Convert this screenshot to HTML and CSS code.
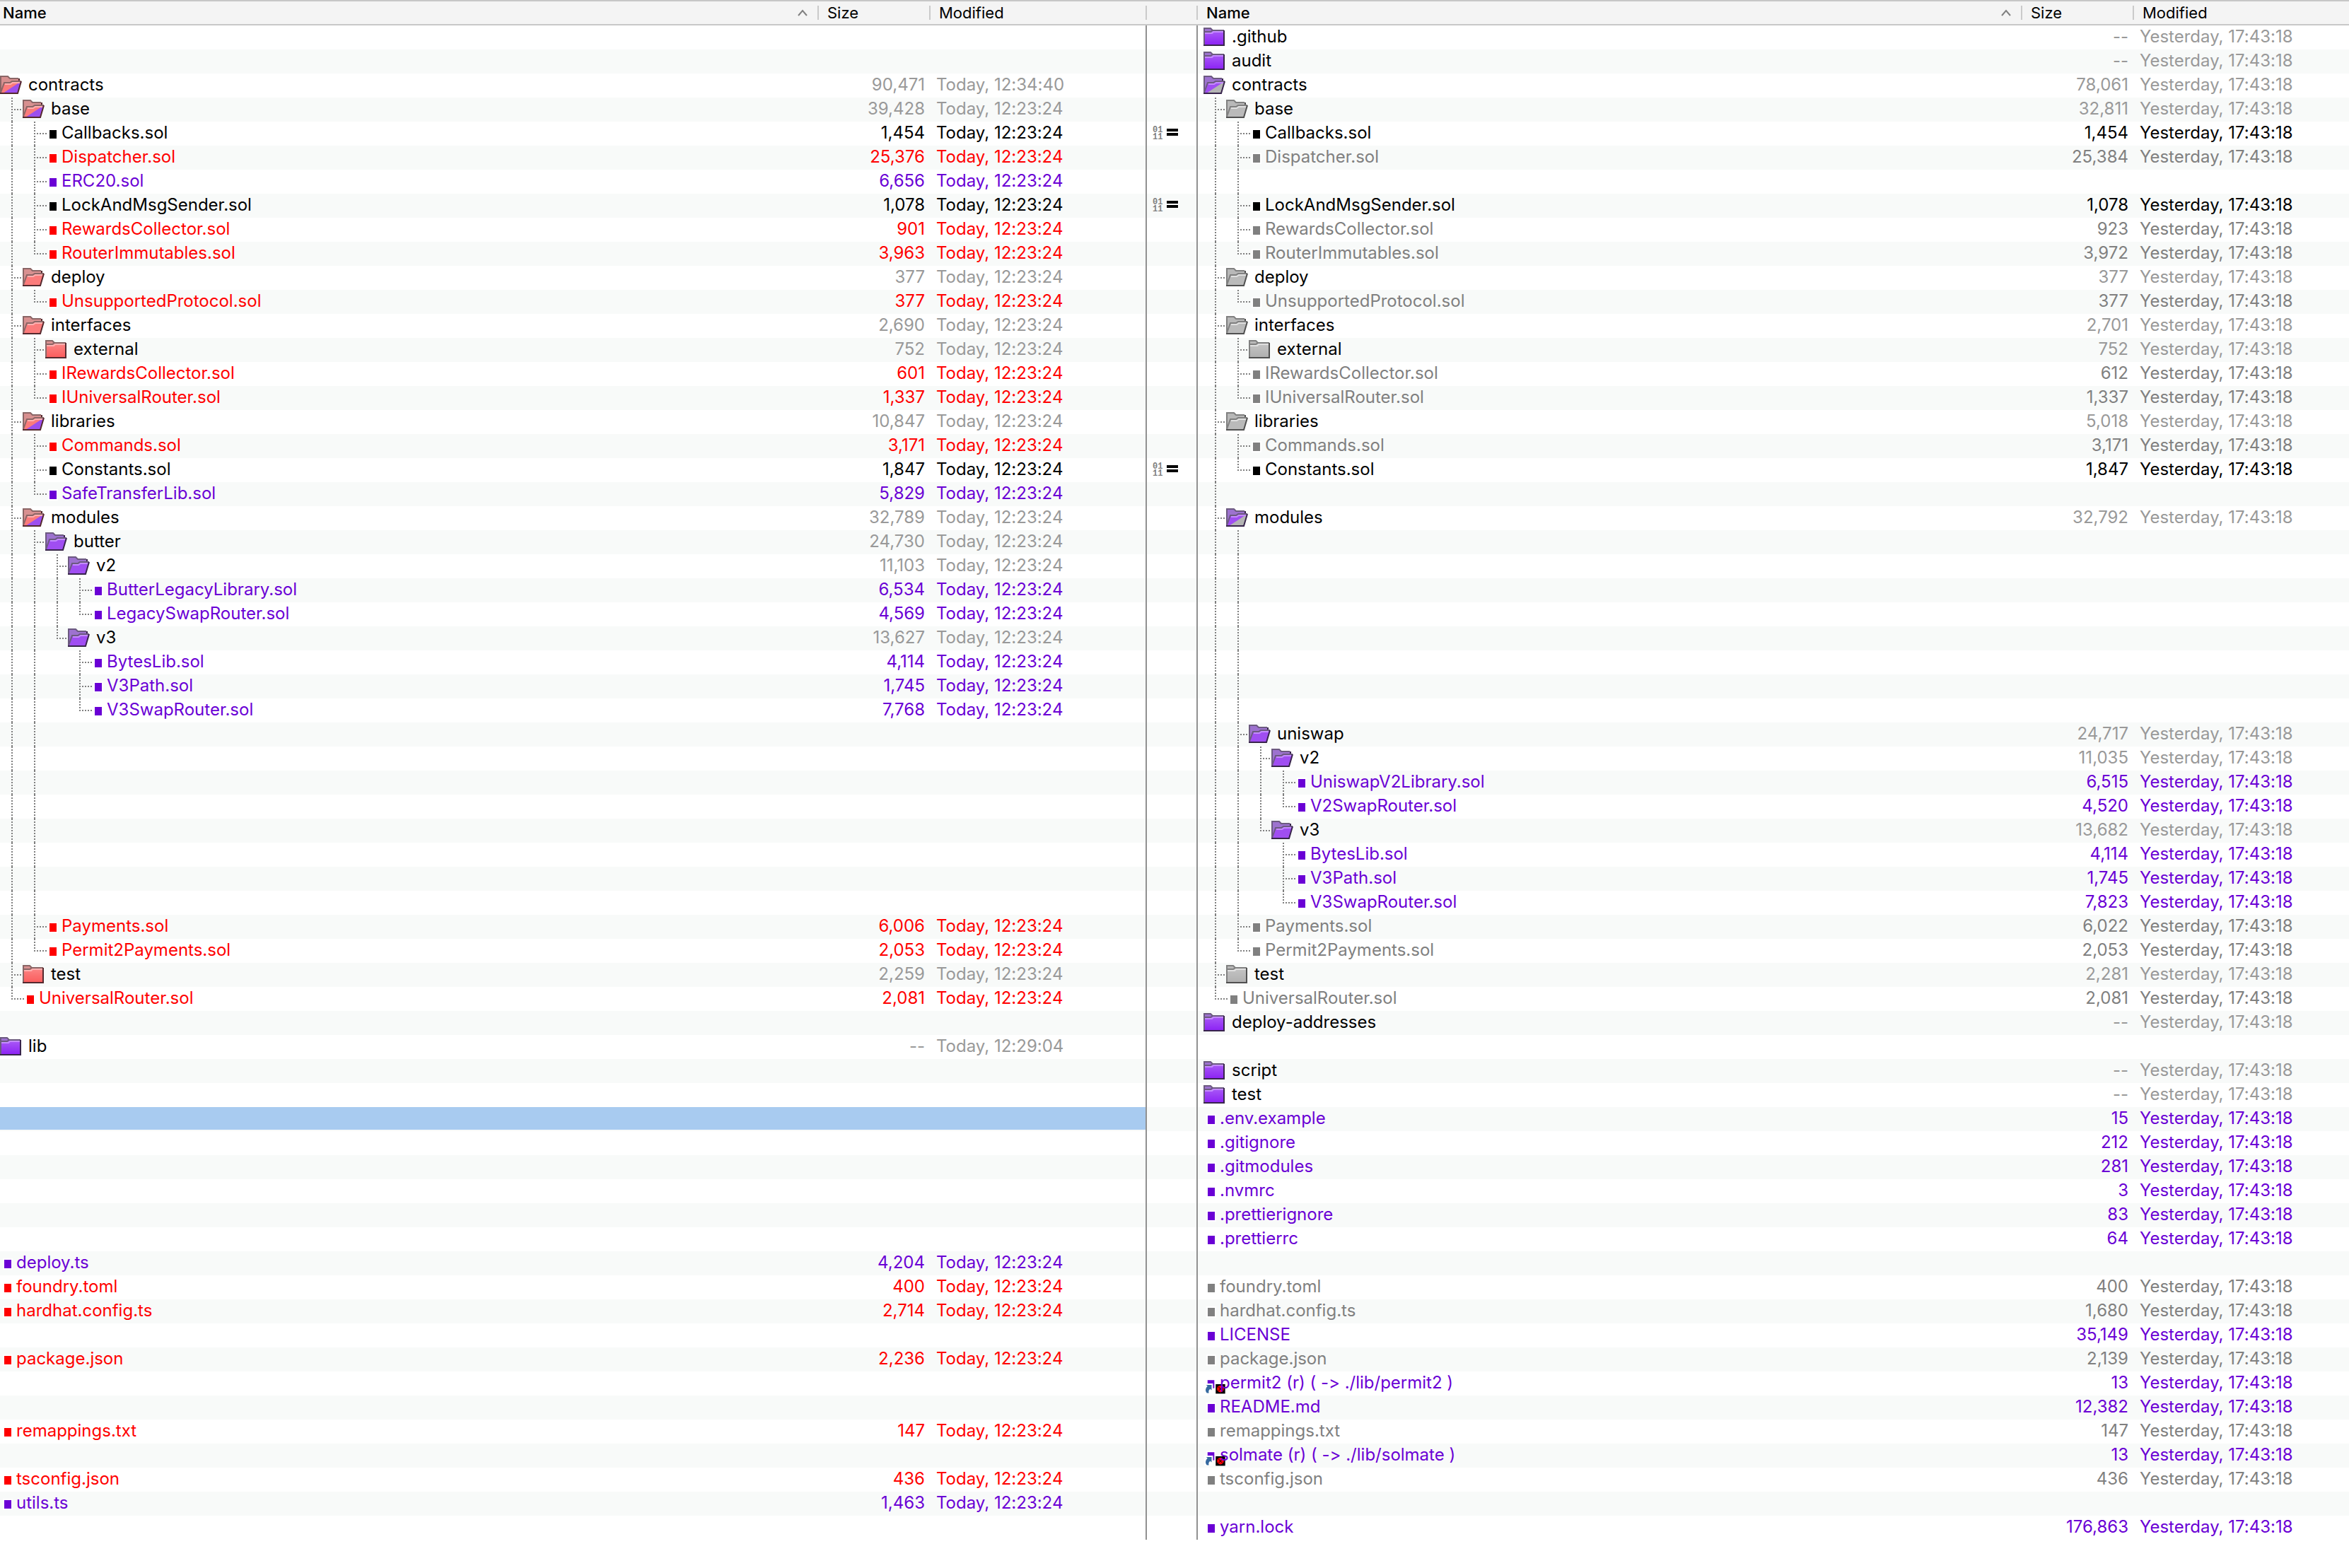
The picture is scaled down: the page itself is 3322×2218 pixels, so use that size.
FILE: index.html
```html
<!DOCTYPE html>
<html lang="en">
<head>
<meta charset="utf-8">
<title>Folder compare</title>
<link rel="stylesheet" href="styles.css">
</head>
<body>
<svg class="sprite" aria-hidden="true">
  <defs>
    <linearGradient id="shade" x1="0" y1="0" x2="0" y2="1"><stop offset="0" stop-color="#fff" stop-opacity=".3"/><stop offset="1" stop-color="#fff" stop-opacity="0"/></linearGradient>
  </defs>
  <symbol id="closed" viewBox="0 0 32 34">
    <path d="M1 28V4h9l3 3h16v21z" fill="var(--low)"/>
    <path d="M1 28V4h9l3 3h16v21z" fill="url(#shade)"/>
    <path d="M1 9V4h9l3 3-2 2z" fill="var(--back)"/>
    <path d="M2 11h10l2-2h14" fill="none" stroke="var(--light)" stroke-width="2"/>
    <path d="M1 28V4h9l3 3h16M1 9h9l3-2" fill="none" stroke="var(--edge)" stroke-width="2"/>
    <path d="M29 7v21H0" fill="none" stroke="var(--dark)" stroke-width="2"/>
  </symbol>
  <symbol id="open" viewBox="0 0 32 34">
    <path d="M1 28V4h10l3 3h12v5H7z" fill="var(--back)"/>
    <path d="M27 7v4" stroke="var(--dark)" stroke-width="2"/>
    <path d="M1 28V4h10l3 3h12" fill="none" stroke="var(--edge)" stroke-width="2"/>
    <path d="M6 13h8l3-2h13l-5 17H1z" fill="var(--front)"/>
    <path d="M30 11l-5 17H4z" fill="var(--half)"/>
    <path d="M7 15h8l3-2h10" fill="none" stroke="var(--light)" stroke-width="2"/>
    <path d="M1 27l5-14h8l3-2h13" fill="none" stroke="var(--edge)" stroke-width="2"/>
    <path d="M30 11l-5 17H0" fill="none" stroke="var(--dark)" stroke-width="2"/>
  </symbol>
  <symbol id="link" viewBox="0 0 24 34">
    <path d="M4 10h14v16H4z" fill="#fff"/><path d="M6 12h10v12H6z" fill="currentColor"/>
    <path d="M1 17h13v15H1z" fill="#fff"/>
    <path d="M4 19h8v8l-2-2c-2 1-3 3-2 6H5c-3-3-2-7 1-10z" fill="#35699f"/>
    <path d="M18 18h14v14H18z" fill="#000"/><circle cx="25" cy="25" r="5" fill="#f00"/><path d="M22 22l6 6m0-6l-6 6" stroke="#000" stroke-width="1"/>
  </symbol>
  <symbol id="caret" viewBox="0 0 16 10"><path d="M2 9l6-7 6 7" fill="none" stroke="#808080" stroke-width="2"/></symbol>
</svg>
<main>
<table class="compare">
<colgroup><col><col class="c-size"><col class="c-mod-left"><col class="c-status"><col><col class="c-size"><col class="c-mod-right"></colgroup>
<thead>
<tr>
<th class="sorted"><button type="button">Name<svg class="caret"><use href="#caret"/></svg></button></th><th><button type="button">Size</button></th><th><button type="button">Modified</button></th>
<th></th>
<th class="sorted"><button type="button">Name<svg class="caret"><use href="#caret"/></svg></button></th><th><button type="button">Size</button></th><th><button type="button">Modified</button></th>
</tr>
</thead>
<tbody>
<tr class="r-dir"><td></td><td></td><td></td><td></td><td><svg class="dir purple"><use href="#closed"/></svg>.github</td><td>--</td><td>Yesterday, 17:43:18</td></tr>
<tr class="r-dir"><td></td><td></td><td></td><td></td><td><svg class="dir purple"><use href="#closed"/></svg>audit</td><td>--</td><td>Yesterday, 17:43:18</td></tr>
<tr class="l-dir r-dir"><td><svg class="dir red with-purple"><use href="#open"/></svg>contracts</td><td>90,471</td><td>Today, 12:34:40</td><td></td><td><svg class="dir purple with-gray"><use href="#open"/></svg>contracts</td><td>78,061</td><td>Yesterday, 17:43:18</td></tr>
<tr class="l-dir r-dir"><td><i class="t"></i><svg class="dir red with-purple"><use href="#open"/></svg>base</td><td>39,428</td><td>Today, 12:23:24</td><td></td><td><i class="t"></i><svg class="dir gray"><use href="#open"/></svg>base</td><td>32,811</td><td>Yesterday, 17:43:18</td></tr>
<tr><td><i class="v"></i><i class="t"></i><i class="file"></i>Callbacks.sol</td><td>1,454</td><td>Today, 12:23:24</td><td><span class="bits">01<br>11</span><i class="equal"></i></td><td><i class="v"></i><i class="t"></i><i class="file"></i>Callbacks.sol</td><td>1,454</td><td>Yesterday, 17:43:18</td></tr>
<tr class="l-red r-gray"><td><i class="v"></i><i class="t"></i><i class="file"></i>Dispatcher.sol</td><td>25,376</td><td>Today, 12:23:24</td><td></td><td><i class="v"></i><i class="t"></i><i class="file"></i>Dispatcher.sol</td><td>25,384</td><td>Yesterday, 17:43:18</td></tr>
<tr class="l-purple"><td><i class="v"></i><i class="t"></i><i class="file"></i>ERC20.sol</td><td>6,656</td><td>Today, 12:23:24</td><td></td><td><i class="v"></i><i class="v"></i></td><td></td><td></td></tr>
<tr><td><i class="v"></i><i class="t"></i><i class="file"></i>LockAndMsgSender.sol</td><td>1,078</td><td>Today, 12:23:24</td><td><span class="bits">01<br>11</span><i class="equal"></i></td><td><i class="v"></i><i class="t"></i><i class="file"></i>LockAndMsgSender.sol</td><td>1,078</td><td>Yesterday, 17:43:18</td></tr>
<tr class="l-red r-gray"><td><i class="v"></i><i class="t"></i><i class="file"></i>RewardsCollector.sol</td><td>901</td><td>Today, 12:23:24</td><td></td><td><i class="v"></i><i class="t"></i><i class="file"></i>RewardsCollector.sol</td><td>923</td><td>Yesterday, 17:43:18</td></tr>
<tr class="l-red r-gray"><td><i class="v"></i><i class="l"></i><i class="file"></i>RouterImmutables.sol</td><td>3,963</td><td>Today, 12:23:24</td><td></td><td><i class="v"></i><i class="l"></i><i class="file"></i>RouterImmutables.sol</td><td>3,972</td><td>Yesterday, 17:43:18</td></tr>
<tr class="l-dir r-dir"><td><i class="t"></i><svg class="dir red"><use href="#open"/></svg>deploy</td><td>377</td><td>Today, 12:23:24</td><td></td><td><i class="t"></i><svg class="dir gray"><use href="#open"/></svg>deploy</td><td>377</td><td>Yesterday, 17:43:18</td></tr>
<tr class="l-red r-gray"><td><i class="v"></i><i class="l"></i><i class="file"></i>UnsupportedProtocol.sol</td><td>377</td><td>Today, 12:23:24</td><td></td><td><i class="v"></i><i class="l"></i><i class="file"></i>UnsupportedProtocol.sol</td><td>377</td><td>Yesterday, 17:43:18</td></tr>
<tr class="l-dir r-dir"><td><i class="t"></i><svg class="dir red"><use href="#open"/></svg>interfaces</td><td>2,690</td><td>Today, 12:23:24</td><td></td><td><i class="t"></i><svg class="dir gray"><use href="#open"/></svg>interfaces</td><td>2,701</td><td>Yesterday, 17:43:18</td></tr>
<tr class="l-dir r-dir"><td><i class="v"></i><i class="t"></i><svg class="dir red"><use href="#closed"/></svg>external</td><td>752</td><td>Today, 12:23:24</td><td></td><td><i class="v"></i><i class="t"></i><svg class="dir gray"><use href="#closed"/></svg>external</td><td>752</td><td>Yesterday, 17:43:18</td></tr>
<tr class="l-red r-gray"><td><i class="v"></i><i class="t"></i><i class="file"></i>IRewardsCollector.sol</td><td>601</td><td>Today, 12:23:24</td><td></td><td><i class="v"></i><i class="t"></i><i class="file"></i>IRewardsCollector.sol</td><td>612</td><td>Yesterday, 17:43:18</td></tr>
<tr class="l-red r-gray"><td><i class="v"></i><i class="l"></i><i class="file"></i>IUniversalRouter.sol</td><td>1,337</td><td>Today, 12:23:24</td><td></td><td><i class="v"></i><i class="l"></i><i class="file"></i>IUniversalRouter.sol</td><td>1,337</td><td>Yesterday, 17:43:18</td></tr>
<tr class="l-dir r-dir"><td><i class="t"></i><svg class="dir red with-purple"><use href="#open"/></svg>libraries</td><td>10,847</td><td>Today, 12:23:24</td><td></td><td><i class="t"></i><svg class="dir gray"><use href="#open"/></svg>libraries</td><td>5,018</td><td>Yesterday, 17:43:18</td></tr>
<tr class="l-red r-gray"><td><i class="v"></i><i class="t"></i><i class="file"></i>Commands.sol</td><td>3,171</td><td>Today, 12:23:24</td><td></td><td><i class="v"></i><i class="t"></i><i class="file"></i>Commands.sol</td><td>3,171</td><td>Yesterday, 17:43:18</td></tr>
<tr><td><i class="v"></i><i class="t"></i><i class="file"></i>Constants.sol</td><td>1,847</td><td>Today, 12:23:24</td><td><span class="bits">01<br>11</span><i class="equal"></i></td><td><i class="v"></i><i class="l"></i><i class="file"></i>Constants.sol</td><td>1,847</td><td>Yesterday, 17:43:18</td></tr>
<tr class="l-purple"><td><i class="v"></i><i class="l"></i><i class="file"></i>SafeTransferLib.sol</td><td>5,829</td><td>Today, 12:23:24</td><td></td><td><i class="v"></i></td><td></td><td></td></tr>
<tr class="l-dir r-dir"><td><i class="t"></i><svg class="dir red with-purple"><use href="#open"/></svg>modules</td><td>32,789</td><td>Today, 12:23:24</td><td></td><td><i class="t"></i><svg class="dir purple with-gray"><use href="#open"/></svg>modules</td><td>32,792</td><td>Yesterday, 17:43:18</td></tr>
<tr class="l-dir"><td><i class="v"></i><i class="t"></i><svg class="dir purple"><use href="#open"/></svg>butter</td><td>24,730</td><td>Today, 12:23:24</td><td></td><td><i class="v"></i><i class="v"></i></td><td></td><td></td></tr>
<tr class="l-dir"><td><i class="v"></i><i class="v"></i><i class="t"></i><svg class="dir purple"><use href="#open"/></svg>v2</td><td>11,103</td><td>Today, 12:23:24</td><td></td><td><i class="v"></i><i class="v"></i></td><td></td><td></td></tr>
<tr class="l-purple"><td><i class="v"></i><i class="v"></i><i class="v"></i><i class="t"></i><i class="file"></i>ButterLegacyLibrary.sol</td><td>6,534</td><td>Today, 12:23:24</td><td></td><td><i class="v"></i><i class="v"></i></td><td></td><td></td></tr>
<tr class="l-purple"><td><i class="v"></i><i class="v"></i><i class="v"></i><i class="l"></i><i class="file"></i>LegacySwapRouter.sol</td><td>4,569</td><td>Today, 12:23:24</td><td></td><td><i class="v"></i><i class="v"></i></td><td></td><td></td></tr>
<tr class="l-dir"><td><i class="v"></i><i class="v"></i><i class="l"></i><svg class="dir purple"><use href="#open"/></svg>v3</td><td>13,627</td><td>Today, 12:23:24</td><td></td><td><i class="v"></i><i class="v"></i></td><td></td><td></td></tr>
<tr class="l-purple"><td><i class="v"></i><i class="v"></i><i></i><i class="t"></i><i class="file"></i>BytesLib.sol</td><td>4,114</td><td>Today, 12:23:24</td><td></td><td><i class="v"></i><i class="v"></i></td><td></td><td></td></tr>
<tr class="l-purple"><td><i class="v"></i><i class="v"></i><i></i><i class="t"></i><i class="file"></i>V3Path.sol</td><td>1,745</td><td>Today, 12:23:24</td><td></td><td><i class="v"></i><i class="v"></i></td><td></td><td></td></tr>
<tr class="l-purple"><td><i class="v"></i><i class="v"></i><i></i><i class="l"></i><i class="file"></i>V3SwapRouter.sol</td><td>7,768</td><td>Today, 12:23:24</td><td></td><td><i class="v"></i><i class="v"></i></td><td></td><td></td></tr>
<tr class="r-dir"><td><i class="v"></i><i class="v"></i></td><td></td><td></td><td></td><td><i class="v"></i><i class="t"></i><svg class="dir purple"><use href="#open"/></svg>uniswap</td><td>24,717</td><td>Yesterday, 17:43:18</td></tr>
<tr class="r-dir"><td><i class="v"></i><i class="v"></i></td><td></td><td></td><td></td><td><i class="v"></i><i class="v"></i><i class="t"></i><svg class="dir purple"><use href="#open"/></svg>v2</td><td>11,035</td><td>Yesterday, 17:43:18</td></tr>
<tr class="r-purple"><td><i class="v"></i><i class="v"></i></td><td></td><td></td><td></td><td><i class="v"></i><i class="v"></i><i class="v"></i><i class="t"></i><i class="file"></i>UniswapV2Library.sol</td><td>6,515</td><td>Yesterday, 17:43:18</td></tr>
<tr class="r-purple"><td><i class="v"></i><i class="v"></i></td><td></td><td></td><td></td><td><i class="v"></i><i class="v"></i><i class="v"></i><i class="l"></i><i class="file"></i>V2SwapRouter.sol</td><td>4,520</td><td>Yesterday, 17:43:18</td></tr>
<tr class="r-dir"><td><i class="v"></i><i class="v"></i></td><td></td><td></td><td></td><td><i class="v"></i><i class="v"></i><i class="l"></i><svg class="dir purple"><use href="#open"/></svg>v3</td><td>13,682</td><td>Yesterday, 17:43:18</td></tr>
<tr class="r-purple"><td><i class="v"></i><i class="v"></i></td><td></td><td></td><td></td><td><i class="v"></i><i class="v"></i><i></i><i class="t"></i><i class="file"></i>BytesLib.sol</td><td>4,114</td><td>Yesterday, 17:43:18</td></tr>
<tr class="r-purple"><td><i class="v"></i><i class="v"></i></td><td></td><td></td><td></td><td><i class="v"></i><i class="v"></i><i></i><i class="t"></i><i class="file"></i>V3Path.sol</td><td>1,745</td><td>Yesterday, 17:43:18</td></tr>
<tr class="r-purple"><td><i class="v"></i><i class="v"></i></td><td></td><td></td><td></td><td><i class="v"></i><i class="v"></i><i></i><i class="l"></i><i class="file"></i>V3SwapRouter.sol</td><td>7,823</td><td>Yesterday, 17:43:18</td></tr>
<tr class="l-red r-gray"><td><i class="v"></i><i class="t"></i><i class="file"></i>Payments.sol</td><td>6,006</td><td>Today, 12:23:24</td><td></td><td><i class="v"></i><i class="t"></i><i class="file"></i>Payments.sol</td><td>6,022</td><td>Yesterday, 17:43:18</td></tr>
<tr class="l-red r-gray"><td><i class="v"></i><i class="l"></i><i class="file"></i>Permit2Payments.sol</td><td>2,053</td><td>Today, 12:23:24</td><td></td><td><i class="v"></i><i class="l"></i><i class="file"></i>Permit2Payments.sol</td><td>2,053</td><td>Yesterday, 17:43:18</td></tr>
<tr class="l-dir r-dir"><td><i class="t"></i><svg class="dir red"><use href="#closed"/></svg>test</td><td>2,259</td><td>Today, 12:23:24</td><td></td><td><i class="t"></i><svg class="dir gray"><use href="#closed"/></svg>test</td><td>2,281</td><td>Yesterday, 17:43:18</td></tr>
<tr class="l-red r-gray"><td><i class="l"></i><i class="file"></i>UniversalRouter.sol</td><td>2,081</td><td>Today, 12:23:24</td><td></td><td><i class="l"></i><i class="file"></i>UniversalRouter.sol</td><td>2,081</td><td>Yesterday, 17:43:18</td></tr>
<tr class="r-dir"><td></td><td></td><td></td><td></td><td><svg class="dir purple"><use href="#closed"/></svg>deploy-addresses</td><td>--</td><td>Yesterday, 17:43:18</td></tr>
<tr class="l-dir"><td><svg class="dir purple"><use href="#closed"/></svg>lib</td><td>--</td><td>Today, 12:29:04</td><td></td><td></td><td></td><td></td></tr>
<tr class="r-dir"><td></td><td></td><td></td><td></td><td><svg class="dir purple"><use href="#closed"/></svg>script</td><td>--</td><td>Yesterday, 17:43:18</td></tr>
<tr class="r-dir"><td></td><td></td><td></td><td></td><td><svg class="dir purple"><use href="#closed"/></svg>test</td><td>--</td><td>Yesterday, 17:43:18</td></tr>
<tr class="r-purple selected"><td></td><td></td><td></td><td></td><td><i class="file"></i>.env.example</td><td>15</td><td>Yesterday, 17:43:18</td></tr>
<tr class="r-purple"><td></td><td></td><td></td><td></td><td><i class="file"></i>.gitignore</td><td>212</td><td>Yesterday, 17:43:18</td></tr>
<tr class="r-purple"><td></td><td></td><td></td><td></td><td><i class="file"></i>.gitmodules</td><td>281</td><td>Yesterday, 17:43:18</td></tr>
<tr class="r-purple"><td></td><td></td><td></td><td></td><td><i class="file"></i>.nvmrc</td><td>3</td><td>Yesterday, 17:43:18</td></tr>
<tr class="r-purple"><td></td><td></td><td></td><td></td><td><i class="file"></i>.prettierignore</td><td>83</td><td>Yesterday, 17:43:18</td></tr>
<tr class="r-purple"><td></td><td></td><td></td><td></td><td><i class="file"></i>.prettierrc</td><td>64</td><td>Yesterday, 17:43:18</td></tr>
<tr class="l-purple"><td><i class="file"></i>deploy.ts</td><td>4,204</td><td>Today, 12:23:24</td><td></td><td></td><td></td><td></td></tr>
<tr class="l-red r-gray"><td><i class="file"></i>foundry.toml</td><td>400</td><td>Today, 12:23:24</td><td></td><td><i class="file"></i>foundry.toml</td><td>400</td><td>Yesterday, 17:43:18</td></tr>
<tr class="l-red r-gray"><td><i class="file"></i>hardhat.config.ts</td><td>2,714</td><td>Today, 12:23:24</td><td></td><td><i class="file"></i>hardhat.config.ts</td><td>1,680</td><td>Yesterday, 17:43:18</td></tr>
<tr class="r-purple"><td></td><td></td><td></td><td></td><td><i class="file"></i>LICENSE</td><td>35,149</td><td>Yesterday, 17:43:18</td></tr>
<tr class="l-red r-gray"><td><i class="file"></i>package.json</td><td>2,236</td><td>Today, 12:23:24</td><td></td><td><i class="file"></i>package.json</td><td>2,139</td><td>Yesterday, 17:43:18</td></tr>
<tr class="r-purple"><td></td><td></td><td></td><td></td><td><svg class="link"><use href="#link"/></svg><span class="over">permit2 (r) ( -&gt; ./lib/permit2 )</span></td><td>13</td><td>Yesterday, 17:43:18</td></tr>
<tr class="r-purple"><td></td><td></td><td></td><td></td><td><i class="file"></i>README.md</td><td>12,382</td><td>Yesterday, 17:43:18</td></tr>
<tr class="l-red r-gray"><td><i class="file"></i>remappings.txt</td><td>147</td><td>Today, 12:23:24</td><td></td><td><i class="file"></i>remappings.txt</td><td>147</td><td>Yesterday, 17:43:18</td></tr>
<tr class="r-purple"><td></td><td></td><td></td><td></td><td><svg class="link"><use href="#link"/></svg><span class="over">solmate (r) ( -&gt; ./lib/solmate )</span></td><td>13</td><td>Yesterday, 17:43:18</td></tr>
<tr class="l-red r-gray"><td><i class="file"></i>tsconfig.json</td><td>436</td><td>Today, 12:23:24</td><td></td><td><i class="file"></i>tsconfig.json</td><td>436</td><td>Yesterday, 17:43:18</td></tr>
<tr class="l-purple"><td><i class="file"></i>utils.ts</td><td>1,463</td><td>Today, 12:23:24</td><td></td><td></td><td></td><td></td></tr>
<tr class="r-purple"><td></td><td></td><td></td><td></td><td><i class="file"></i>yarn.lock</td><td>176,863</td><td>Yesterday, 17:43:18</td></tr>
</tbody>
</table>
</main>
</body>
</html>
```
FILE: styles.css
```css
:root {
  --row: 34px;
  --guide: #808080;
}

body {
  margin: 0;
  background: #fff;
  color: #000;
  font: 24px/32px Inter, "Liberation Sans", sans-serif;
  font-feature-settings: "calt" 0;
}

main {
  overflow: hidden;
}

.sprite {
  position: absolute;
  width: 0;
  height: 0;
}

/* The panes are scrolled sideways by the width of the left gutter. */
.compare {
  width: calc(100% + 8px);
  margin-left: -8px;
  border-collapse: separate;
  border-spacing: 0;
  table-layout: fixed;
}

.c-size { width: 158px; }
.c-mod-left { width: 306px; }
.c-status { width: 72px; }
.c-mod-right { width: 304px; }

/* Header */
th {
  box-sizing: border-box;
  height: 36px;
  padding: 0;
  border-top: 2px solid #c6c6c6;
  border-bottom: 2px solid #c8c8c8;
  background: linear-gradient(#cacaca, #cacaca) right 6px / 2px 20px no-repeat #f4f4f4;
}

th:last-child {
  background: #f4f4f4;
}

th button {
  display: flex;
  align-items: center;
  justify-content: space-between;
  width: 100%;
  height: 32px;
  padding: 0 15px 0 12px;
  border: 0;
  background: none;
  color: inherit;
  font: 400 22px/32px Inter, "Liberation Sans", sans-serif;
}

th.sorted button {
  font-weight: 500;
}

.caret {
  width: 16px;
  height: 10px;
}

/* Rows */
td {
  height: var(--row);
  padding: 0 8px;
  vertical-align: top;
  white-space: nowrap;
}

tbody tr:nth-child(even) {
  background: #f8faf9;
}

td:nth-child(2),
td:nth-child(6) {
  text-align: right;
}

td:nth-child(3),
td:nth-child(4) {
  border-right: 2px solid #919191;
}

.selected td:nth-child(-n+3) {
  background: linear-gradient(#a8cbf0, #a8cbf0) 0 0 / 100% 32px no-repeat;
}

.l-red td:nth-child(-n+3) { color: #f00; }
.l-purple td:nth-child(-n+3) { color: #6a00d5; }
.r-purple td:nth-child(n+5) { color: #6a00d5; }
.r-gray td:nth-child(n+5) { color: #808080; }

.l-dir td:nth-child(2),
.l-dir td:nth-child(3),
.r-dir td:nth-child(6),
.r-dir td:nth-child(7) {
  color: #999;
}

/* Tree guides */
td i {
  display: inline-block;
  width: 32px;
  height: var(--row);
  vertical-align: top;
}

.v {
  background: repeating-linear-gradient(var(--guide) 0 2px, transparent 2px 4px) 16px 0 / 2px 100% no-repeat;
}

.t {
  background:
    repeating-linear-gradient(var(--guide) 0 2px, transparent 2px 4px) 16px 0 / 2px 100% no-repeat,
    repeating-linear-gradient(90deg, var(--guide) 0 2px, transparent 2px 4px) 16px 16px / 16px 2px no-repeat;
}

.l {
  background:
    repeating-linear-gradient(var(--guide) 0 2px, transparent 2px 4px) 16px 0 / 2px 18px no-repeat,
    repeating-linear-gradient(90deg, var(--guide) 0 2px, transparent 2px 4px) 16px 16px / 16px 2px no-repeat;
}

/* Item icons */
td .file {
  width: 23px;
  background:
    linear-gradient(currentColor, currentColor) 6px 12px / 10px 12px no-repeat,
    linear-gradient(#fff, #fff) 4px 10px / 14px 16px no-repeat;
}

.t + .file,
.l + .file {
  background:
    linear-gradient(var(--guide), var(--guide)) 0 16px / 2px 2px no-repeat,
    linear-gradient(currentColor, currentColor) 6px 12px / 10px 12px no-repeat,
    linear-gradient(#fff, #fff) 4px 10px / 14px 16px no-repeat;
}

.dir {
  width: 32px;
  height: var(--row);
  margin-right: 8px;
  vertical-align: top;
}

.link {
  width: 23px;
  height: var(--row);
  overflow: visible;
  vertical-align: top;
}

#link {
  overflow: visible;
}

.over {
  position: relative;
}

.red {
  --back: #d89090;
  --front: #fb7b7b;
  --half: #fb7b7b;
  --low: #fb5c5c;
  --light: #ffb0b0;
  --edge: #8a6666;
  --dark: #55292e;
}

.purple {
  --back: #9d72cf;
  --front: #a04ef2;
  --half: #a04ef2;
  --low: #8c22f4;
  --light: #c48cff;
  --edge: #6c5a80;
  --dark: #38244c;
}

.gray {
  --back: #b8b8b8;
  --front: #bababa;
  --half: #bababa;
  --low: #b0b0b0;
  --light: #e0e0e0;
  --edge: #808080;
  --dark: #505050;
}

.with-purple { --half: #9c4fee; }
.with-gray { --half: #b4b4b4; }

/* Comparison result */
.bits {
  display: inline-block;
  padding-top: 7px;
  color: #808080;
  font: 700 12px/10px "Liberation Mono", monospace;
  vertical-align: top;
}

td .equal {
  width: 20px;
  margin-left: 4px;
  background:
    linear-gradient(#000, #000) 2px 10px / 16px 4px no-repeat,
    linear-gradient(#000, #000) 2px 16px / 16px 4px no-repeat,
    linear-gradient(#fff, #fff) 0 8px / 20px 14px no-repeat;
}
```
